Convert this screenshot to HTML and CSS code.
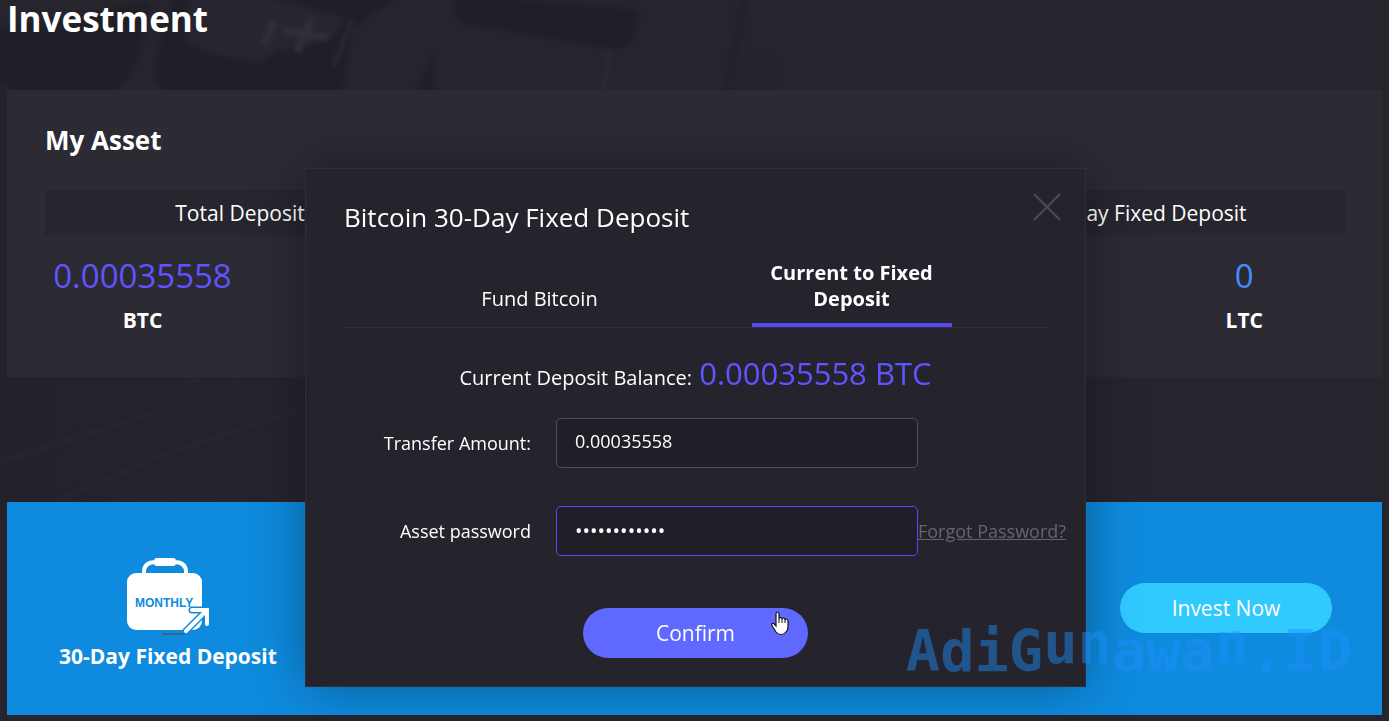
FILE: index.html
```html
<!DOCTYPE html>
<html lang="en">
<head>
    <meta charset="UTF-8">
    <meta name="viewport" content="width=device-width, initial-scale=1.0">
    <title>Investment</title>
    <link rel="stylesheet" href="styles.css">
</head>
<body>
    <!-- faint keyboard photo behind the page -->
    <svg class="backdrop" width="1389" height="520" viewBox="0 0 1389 520" aria-hidden="true">
        <defs>
            <filter id="soft" x="-10%" y="-10%" width="120%" height="120%" color-interpolation-filters="sRGB"><feGaussianBlur stdDeviation="2"/></filter>
            <linearGradient id="fade" x1="0" x2="1" y1="0" y2="0">
                <stop offset="0" stop-color="#1f1e26"/>
                <stop offset="1" stop-color="#1f1e26" stop-opacity="0"/>
            </linearGradient>
        </defs>
        <rect y="90" width="420" height="430" fill="url(#fade)" opacity="0.4"/>
        <g filter="url(#soft)">
            <path fill="#201f27" d="M-10 28 L60 20 L152 0 L140 50 Q128 94 96 95 L84 95 L80 120 L22 120 L20 95 L-10 78Z"/>
            <path fill="#201f27" d="M178 -5 L300 -10 L360 0 L400 -5 L375 12 L352 30 L338 120 L200 120 L155 82 Q158 30 178 -5Z"/>
            <path fill="#272630" d="M190 -4 L280 0 L345 18 L330 40 L275 52 L260 62 Q200 55 185 40Z"/>
            <path fill="#201f27" d="M455 -5 L640 10 L634 36 Q626 52 606 48 L465 24 Q448 18 455 -5Z"/>
            <path fill="#201f27" d="M434 50 Q428 85 446 110 L408 110Z"/>
            <path fill="none" stroke="#302f38" stroke-width="8" d="M282 30 L328 38 M311 20 L297 52 M274 20 L264 44"/>
            <path fill="none" stroke="#2c2b34" stroke-width="4" d="M352 20 L334 66 M610 50 L602 95"/>
            <path fill="#23222a" d="M740 -5 L750 -5 L740 50 L730 95 L722 95Z"/>
            <path fill="#25242c" d="M740 50 L776 56 L782 95 L730 95Z"/>
        </g>
        <g filter="url(#soft)" fill="none" stroke="#292831" stroke-width="3">
            <path d="M0 462 L150 414 L200 376"/>
            <path d="M60 500 L150 460 L310 405"/>
        </g>
    </svg>

    <main class="page">
        <h1>Investment</h1>

        <section class="asset">
            <h2>My Asset</h2>
            <table class="asset-table">
                <colgroup>
                    <col class="left"><col class="left"><col>
                    <col class="right"><col class="right">
                </colgroup>
                <thead>
                    <tr>
                        <th colspan="2">Total Deposit</th>
                        <th></th>
                        <th colspan="2">30-Day Fixed Deposit</th>
                    </tr>
                </thead>
                <tbody>
                    <tr>
                        <td><span class="amount">0.00035558</span><b>BTC</b></td>
                        <td></td>
                        <td></td>
                        <td></td>
                        <td><span class="amount blue">0</span><b>LTC</b></td>
                    </tr>
                </tbody>
            </table>
        </section>

        <section class="product">
            <div class="product-name">
                <svg width="84" height="80" viewBox="0 0 84 80" aria-hidden="true">
                    <path d="M18 18 V15 Q18 5 30 5 H48 Q60 5 60 15 V18" fill="none" stroke="#fff" stroke-width="4"/>
                    <rect x="28" y="1" width="22" height="8" rx="3" fill="#fff"/>
                    <rect x="1" y="16" width="75" height="57" rx="9" fill="#fff"/>
                    <path d="M36 77 H60" stroke="#3d6683" stroke-width="2"/>
                    <text class="icon-text" x="9" y="50">MONTHLY</text>
                    <path d="M60 74 L80 54 M66 53 H81 V66" fill="none" stroke="#0e8bde" stroke-width="7" stroke-linecap="round"/>
                    <path d="M60 74 L80 54 M66 53 H81 V67" fill="none" stroke="#fff" stroke-width="4" stroke-linecap="round"/>
                </svg>
                <h3>30-Day Fixed Deposit</h3>
            </div>
            <button type="button" class="btn invest">Invest Now</button>
        </section>
    </main>

    <div class="overlay">
        <div class="modal" role="dialog" aria-labelledby="modalTitle">
            <div class="modal-head">
                <h2 id="modalTitle">Bitcoin 30-Day Fixed Deposit</h2>
                <button type="button" class="close" aria-label="Close">
                    <svg width="28" height="28" viewBox="0 0 28 28"><path d="M1 1 L27 27 M27 1 L1 27" stroke="#4d4c53" stroke-width="2"/></svg>
                </button>
            </div>

            <div class="tabs">
                <button type="button" class="tab">Fund Bitcoin</button>
                <button type="button" class="tab active">Current to Fixed Deposit</button>
            </div>

            <p class="balance">Current Deposit Balance: <span>0.00035558 BTC</span></p>

            <form id="transferForm">
                <div class="row">
                    <label for="amount">Transfer Amount:</label>
                    <input type="text" id="amount" name="amount" value="0.00035558">
                </div>
                <div class="row">
                    <label for="password">Asset password</label>
                    <input type="password" id="password" name="password" class="focus" value="abcdefghijkl">
                    <a href="#">Forgot Password?</a>
                </div>
                <button type="submit" class="btn confirm">Confirm</button>
            </form>
        </div>
    </div>

    <div class="watermark">AdiG<span>un</span>awa<span>n</span>.ID</div>

    <svg class="cursor" width="18" height="25" viewBox="0 0 18 25" aria-hidden="true">
        <path d="M5 13 V3 Q5 1 6.500 1 Q8 1 8 3 V8 Q8 6.500 9.500 6.500 Q11 6.500 11 8 Q11 7 12.500 7 Q14 7 14 9 Q14 8 15.500 8 Q17 8 17 10 V16 Q17 19 15 21 Q13 23.500 10 23.500 Q7 23.500 5 21 L1.500 15.500 Q0 13 1.500 12.500 Q3 12 4 14 L5 15Z" fill="#fff" stroke="#111" stroke-width="1.200"/>
        <path d="M8 8 V12 M11 8 V12 M14 9 V12" stroke="#111"/>
    </svg>
</body>
</html>
```
FILE: styles.css
```css
* {
    box-sizing: border-box;
}
body {
    margin: 0;
    background-color: #26252e;
    color: #fff;
    font-family: "Open Sans", "Noto Sans", sans-serif;
    font-size: 20px;
    overflow: hidden;
}
h1, h2, h3, p {
    margin: 0;
}
button, input {
    font-family: inherit;
    color: #fff;
}
button {
    border: none;
    cursor: pointer;
}
.backdrop {
    position: absolute;
    top: 0;
    left: 0;
    z-index: -1;
}
.page {
    padding: 0 7px;
}
h1 {
    height: 90px;
    font-size: 35px;
    line-height: 38px;
}

/* my asset */
.asset {
    background-color: #2c2a33;
    padding: 30px 37px 36px 38px;
}
.asset h2 {
    font-size: 26px;
    line-height: 40px;
    margin-bottom: 30px;
}
.asset-table {
    width: 100%;
    table-layout: fixed;
    border-collapse: collapse;
    text-align: center;
}
.asset-table .left {
    width: 15%;
}
.asset-table .right {
    width: 15.5%;
}
.asset-table th {
    height: 45px;
    padding: 0;
    background-color: #27252e;
    font-size: 21px;
    font-weight: normal;
}
.asset-table td {
    padding: 20px 0 0;
    height: 104px;
    vertical-align: top;
}
.amount {
    display: block;
    color: #5f54ff;
    font-size: 33px;
    line-height: 42px;
}
.amount.blue {
    color: #3d90ff;
}
.asset-table b {
    display: block;
    font-size: 21px;
    line-height: 42px;
    padding-top: 2px;
}

/* product bar */
.product {
    display: flex;
    justify-content: space-between;
    align-items: center;
    margin-top: 125px;
    padding: 55px 50px 39px 52px;
    background-color: #0e8bde;
}
.product-name {
    text-align: center;
}
.product-name svg {
    display: block;
    margin: 0 auto;
}
.product-name h3 {
    font-size: 21px;
    line-height: 39px;
}
.icon-text {
    font: bold 12px "Liberation Sans", sans-serif;
    fill: #0e8bde;
}
.btn {
    height: 50px;
    border-radius: 25px;
    font-size: 21px;
}
.invest {
    width: 212px;
    margin-bottom: 18px;
    background-color: #30caff;
}

/* modal */
.overlay {
    position: fixed;
    inset: 0;
    display: flex;
    justify-content: center;
    align-items: flex-start;
    padding: 168px 0 0 2px;
}
.modal {
    width: 781px;
    padding: 18px 38px 28px;
    background-color: #25242c;
    border: 1px solid #302f38;
    box-shadow: 0 0 50px rgba(0, 0, 0, 0.35);
}
.modal-head {
    display: flex;
    justify-content: space-between;
    align-items: flex-start;
}
.modal-head h2 {
    font-size: 26px;
    font-weight: normal;
    line-height: 60px;
}
.close {
    margin: 6px -14px 0 0;
    padding: 0;
    background: none;
}
.close svg {
    display: block;
}
.tabs {
    display: flex;
    justify-content: center;
    align-items: flex-end;
    gap: 112px;
    margin-top: 13px;
    border-bottom: 1px solid #302f38;
}
.tab {
    width: 200px;
    padding: 0 0 11px;
    background: none;
    border-bottom: 4px solid transparent;
    font-size: 20px;
    line-height: 26px;
}
.tab.active {
    border-color: #5548f5;
    font-weight: bold;
}
.balance {
    margin-top: 21px;
    line-height: 48px;
    text-align: center;
}
.balance span {
    margin-left: 2px;
    color: #5f54ff;
    font-size: 31px;
}
form {
    margin-top: 16px;
}
.row {
    display: grid;
    grid-template-columns: 187px 387px auto;
    align-items: center;
    margin-bottom: 38px;
    font-size: 18px;
    white-space: nowrap;
}
.row label {
    text-align: right;
}
.row input {
    height: 50px;
    margin-left: 25px;
    padding: 0 18px 4px;
    background-color: #201f27;
    border: 1px solid #504f58;
    border-radius: 5px;
    font-size: 18px;
    outline: none;
}
.row input[type="password"] {
    padding-bottom: 2px;
    font-size: 20px;
}
.row input.focus {
    border-color: #5548f5;
}
.row a {
    color: #66656b;
}
.confirm {
    display: block;
    width: 225px;
    margin: 52px auto 0;
    background-color: #5f68ff;
}

.watermark {
    position: fixed;
    right: 37px;
    bottom: 37px;
    color: #1e90ff;
    opacity: 0.45;
    font: bold 57px "DejaVu Sans Mono", monospace;
}
.watermark span {
    vertical-align: 8px;
}
.cursor {
    position: fixed;
    top: 611px;
    left: 771px;
}
```
